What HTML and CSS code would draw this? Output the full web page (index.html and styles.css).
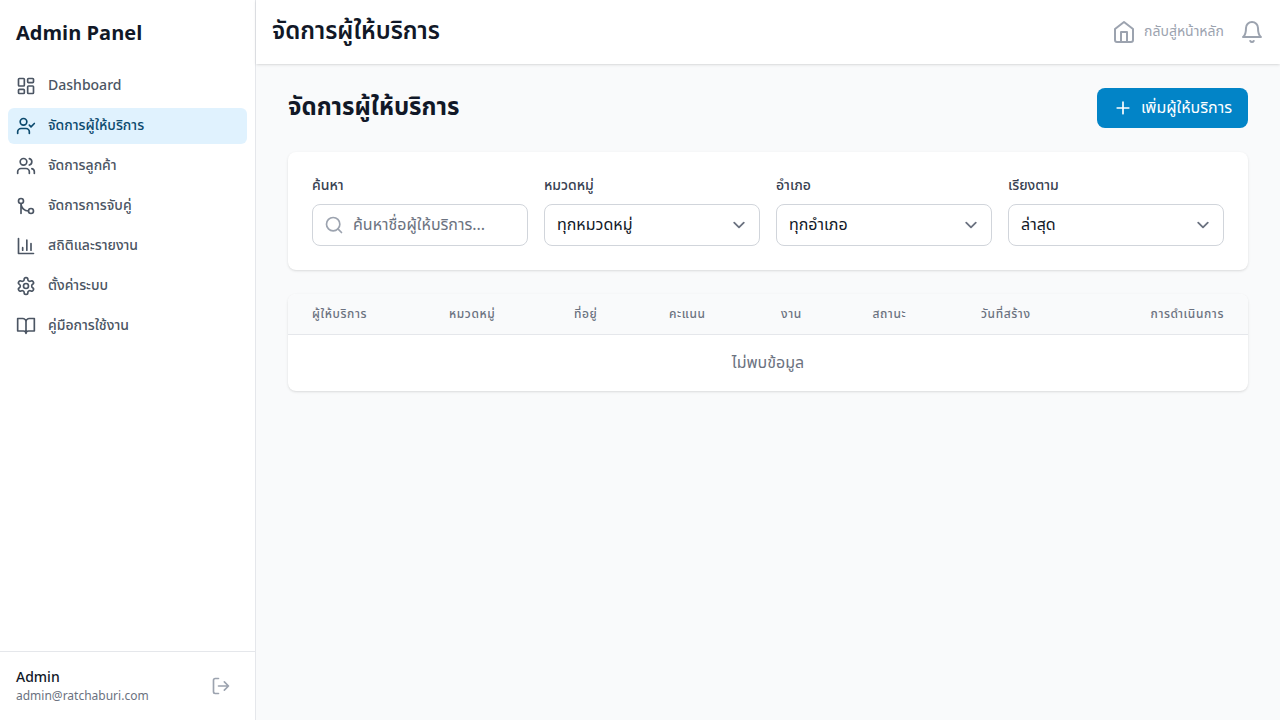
FILE: index.html
```html
<!DOCTYPE html>
<html lang="th">
<head>
<meta charset="utf-8">
<title>Admin Panel</title>
<link rel="stylesheet" href="styles.css">
</head>
<body>
<div class="app">
  <aside class="sidebar">
    <div class="brand">Admin Panel</div>
    <nav class="nav">
      <a class="nav-item"><svg class="icon" viewBox="0 0 24 24"><rect width="7" height="9" x="3" y="3" rx="1"/><rect width="7" height="5" x="14" y="3" rx="1"/><rect width="7" height="9" x="14" y="12" rx="1"/><rect width="7" height="5" x="3" y="16" rx="1"/></svg><span>Dashboard</span></a>
      <a class="nav-item active"><svg class="icon" viewBox="0 0 24 24"><path d="M16 21v-2a4 4 0 0 0-4-4H6a4 4 0 0 0-4 4v2"/><circle cx="9" cy="7" r="4"/><path d="m16 11 2 2 4-4"/></svg><span>จัดการผู้ให้บริการ</span></a>
      <a class="nav-item"><svg class="icon" viewBox="0 0 24 24"><path d="M16 21v-2a4 4 0 0 0-4-4H6a4 4 0 0 0-4 4v2"/><circle cx="9" cy="7" r="4"/><path d="M22 21v-2a4 4 0 0 0-3-3.87M16 3.13a4 4 0 0 1 0 7.75"/></svg><span>จัดการลูกค้า</span></a>
      <a class="nav-item"><svg class="icon" viewBox="0 0 24 24"><circle cx="18" cy="18" r="3"/><circle cx="6" cy="6" r="3"/><path d="M6 21V9a9 9 0 0 0 9 9"/></svg><span>จัดการการจับคู่</span></a>
      <a class="nav-item"><svg class="icon" viewBox="0 0 24 24"><path d="M3 3v18h18M18 17V9M13 17V5M8 17v-3"/></svg><span>สถิติและรายงาน</span></a>
      <a class="nav-item"><svg class="icon" viewBox="0 0 24 24"><path d="M12.22 2h-.44a2 2 0 0 0-2 2v.18a2 2 0 0 1-1 1.73l-.43.25a2 2 0 0 1-2 0l-.15-.08a2 2 0 0 0-2.73.73l-.22.38a2 2 0 0 0 .73 2.73l.15.1a2 2 0 0 1 1 1.72v.51a2 2 0 0 1-1 1.74l-.15.09a2 2 0 0 0-.73 2.73l.22.38a2 2 0 0 0 2.73.73l.15-.08a2 2 0 0 1 2 0l.43.25a2 2 0 0 1 1 1.73V20a2 2 0 0 0 2 2h.44a2 2 0 0 0 2-2v-.18a2 2 0 0 1 1-1.73l.43-.25a2 2 0 0 1 2 0l.15.08a2 2 0 0 0 2.73-.73l.22-.39a2 2 0 0 0-.73-2.73l-.15-.08a2 2 0 0 1-1-1.74v-.5a2 2 0 0 1 1-1.74l.15-.09a2 2 0 0 0 .73-2.73l-.22-.38a2 2 0 0 0-2.73-.73l-.15.08a2 2 0 0 1-2 0l-.43-.25a2 2 0 0 1-1-1.73V4a2 2 0 0 0-2-2z"/><circle cx="12" cy="12" r="3"/></svg><span>ตั้งค่าระบบ</span></a>
      <a class="nav-item"><svg class="icon" viewBox="0 0 24 24"><path d="M2 3h6a4 4 0 0 1 4 4v14a3 3 0 0 0-3-3H2zM22 3h-6a4 4 0 0 0-4 4v14a3 3 0 0 1 3-3h7z"/></svg><span>คู่มือการใช้งาน</span></a>
    </nav>
    <div class="account">
      <div>
        <div class="account-name">Admin</div>
        <div class="account-email">admin@ratchaburi.com</div>
      </div>
      <button class="logout" type="button" aria-label="Log out"><svg class="icon" viewBox="0 0 24 24"><path d="M9 21H5a2 2 0 0 1-2-2V5a2 2 0 0 1 2-2h4M16 17l5-5-5-5M21 12H9"/></svg></button>
    </div>
  </aside>
  <div class="page">
    <header class="topbar">
      <h1 class="topbar-title">จัดการผู้ให้บริการ</h1>
      <div class="topbar-actions">
        <a class="home-link"><svg class="icon icon-lg" viewBox="0 0 24 24"><path d="m3 9 9-7 9 7v11a2 2 0 0 1-2 2H5a2 2 0 0 1-2-2z"/><path d="M9 22V12h6v10"/></svg><span>กลับสู่หน้าหลัก</span></a>
        <svg class="icon icon-lg" viewBox="0 0 24 24"><path d="M6 8a6 6 0 0 1 12 0c0 7 3 9 3 9H3s3-2 3-9M10.3 21a1.94 1.94 0 0 0 3.4 0"/></svg>
      </div>
    </header>
    <main class="content">
      <div class="heading">
        <h2 class="heading-title">จัดการผู้ให้บริการ</h2>
        <button class="add-button" type="button"><svg class="icon" viewBox="0 0 24 24"><path d="M5 12h14M12 5v14"/></svg><span>เพิ่มผู้ให้บริการ</span></button>
      </div>
      <section class="filters">
        <div class="field">
          <label class="label" for="q">ค้นหา</label>
          <div class="search"><svg class="icon" viewBox="0 0 24 24"><circle cx="11" cy="11" r="8"/><path d="m21 21-4.3-4.3"/></svg><input class="search-input" id="q" type="text" placeholder="ค้นหาชื่อผู้ให้บริการ..."></div>
        </div>
        <div class="field">
          <label class="label" for="category">หมวดหมู่</label>
          <select class="select" id="category"><option>ทุกหมวดหมู่</option></select>
        </div>
        <div class="field">
          <label class="label" for="district">อำเภอ</label>
          <select class="select" id="district"><option>ทุกอำเภอ</option></select>
        </div>
        <div class="field">
          <label class="label" for="sort">เรียงตาม</label>
          <select class="select" id="sort"><option>ล่าสุด</option></select>
        </div>
      </section>
      <section class="table-card">
        <table class="table">
          <colgroup><col class="c-provider"><col class="c-category"><col class="c-address"><col class="c-score"><col class="c-jobs"><col class="c-status"><col class="c-created"><col></colgroup>
          <thead><tr><th>ผู้ให้บริการ</th><th>หมวดหมู่</th><th>ที่อยู่</th><th>คะแนน</th><th>งาน</th><th>สถานะ</th><th>วันที่สร้าง</th><th class="right">การดำเนินการ</th></tr></thead>
          <tbody><tr><td class="empty" colspan="8">ไม่พบข้อมูล</td></tr></tbody>
        </table>
      </section>
    </main>
  </div>
</div>
</body>
</html>
```
FILE: styles.css
```css
*, *::before, *::after { box-sizing: border-box; }
body {
  margin: 0;
  font-family: "Noto Sans Thai", "Noto Sans", sans-serif;
  font-size: 16px;
  line-height: 24px;
  color: #111827;
  background: #f9fafb;
}
h1, h2 { margin: 0; }
button, input, select { font: inherit; color: inherit; margin: 0; }
button { border: 0; background: none; }
.icon {
  display: block;
  flex: none;
  width: 20px;
  height: 20px;
  fill: none;
  stroke: currentColor;
  stroke-width: 2;
  stroke-linecap: round;
  stroke-linejoin: round;
}
.icon-lg { width: 24px; height: 24px; }

.app { display: flex; height: 100vh; overflow: hidden; }
.sidebar {
  display: flex;
  flex: none;
  flex-direction: column;
  width: 256px;
  background: #fff;
  border-right: 1px solid #e5e7eb;
}
.brand { padding: 20px 16px 16px; font-size: 20px; line-height: 28px; font-weight: 700; }
.nav { display: flex; flex: 1; flex-direction: column; gap: 4px; padding: 4px 8px; }
.nav-item {
  display: flex;
  align-items: center;
  gap: 12px;
  padding: 8px;
  border-radius: 6px;
  font-size: 14px;
  line-height: 20px;
  font-weight: 500;
  color: #4b5563;
}
.nav-item.active { color: #0c4a6e; background: #e0f2fe; }
.account {
  display: flex;
  align-items: center;
  justify-content: space-between;
  padding: 16px;
  border-top: 1px solid #e5e7eb;
}
.account-name { font-size: 14px; line-height: 20px; font-weight: 500; }
.account-email { font-size: 12px; line-height: 16px; color: #6b7280; }
.logout { padding: 8px; color: #9ca3af; }

.page { display: flex; flex: 1; flex-direction: column; min-width: 0; }
.topbar {
  display: flex;
  flex: none;
  align-items: center;
  justify-content: space-between;
  height: 64px;
  padding: 0 16px;
  background: #fff;
  box-shadow: 0 1px 3px rgba(0, 0, 0, .1), 0 1px 2px -1px rgba(0, 0, 0, .1);
}
.topbar-title { font-size: 24px; line-height: 32px; font-weight: 600; }
.topbar-actions { display: flex; align-items: center; gap: 16px; color: #9ca3af; }
.home-link { display: flex; align-items: center; gap: 8px; font-size: 14px; line-height: 20px; }

.content { display: flex; flex-direction: column; gap: 24px; padding: 24px 32px; }
.heading { display: flex; align-items: center; justify-content: space-between; }
.heading-title { font-size: 24px; line-height: 32px; font-weight: 700; }
.add-button {
  display: flex;
  align-items: center;
  gap: 8px;
  padding: 8px 16px;
  border-radius: 8px;
  color: #fff;
  background: #0284c7;
}
.filters, .table-card {
  background: #fff;
  border-radius: 8px;
  box-shadow: 0 1px 3px rgba(0, 0, 0, .1), 0 1px 2px -1px rgba(0, 0, 0, .1);
}
.filters { display: grid; grid-template-columns: repeat(4, 1fr); gap: 16px; padding: 24px; }
.field { display: flex; flex-direction: column; gap: 8px; min-width: 0; }
.label { font-size: 14px; line-height: 20px; font-weight: 500; color: #374151; }
.search, .select {
  width: 100%;
  height: 42px;
  border: 1px solid #d1d5db;
  border-radius: 8px;
  background-color: #fff;
}
.search { display: flex; align-items: center; gap: 9px; padding: 0 11px; color: #9ca3af; }
.search-input { flex: 1; min-width: 0; padding: 0; border: 0; outline: 0; height: 24px; background: none; color: #111827; }
.search-input::placeholder { color: #6b7280; opacity: 1; }
.select {
  appearance: none;
  padding: 8px 40px 8px 12px;
  background-image: url("data:image/svg+xml,%3Csvg xmlns='http://www.w3.org/2000/svg' fill='none' viewBox='0 0 20 20'%3E%3Cpath stroke='%236b7280' stroke-linecap='round' stroke-linejoin='round' stroke-width='1.5' d='M6 8l4 4 4-4'/%3E%3C/svg%3E");
  background-position: right 8px center;
  background-repeat: no-repeat;
  background-size: 24px 24px;
}

.table-card { overflow: hidden; }
.table { width: 100%; table-layout: fixed; border-collapse: collapse; }
.c-provider { width: 137px; }
.c-category { width: 125px; }
.c-address { width: 95px; }
.c-score { width: 112px; }
.c-jobs { width: 91.4px; }
.c-status { width: 108.6px; }
.c-created { width: 125px; }
.table thead { background: #f9fafb; border-bottom: 1px solid #e5e7eb; }
.table th {
  padding: 12px 24px;
  font-size: 12px;
  line-height: 16px;
  font-weight: 500;
  letter-spacing: .05em;
  text-align: left;
  white-space: nowrap;
  color: #6b7280;
}
.table th.right { text-align: right; }
.table td.empty { padding: 16px 24px; text-align: center; color: #6b7280; }
```
